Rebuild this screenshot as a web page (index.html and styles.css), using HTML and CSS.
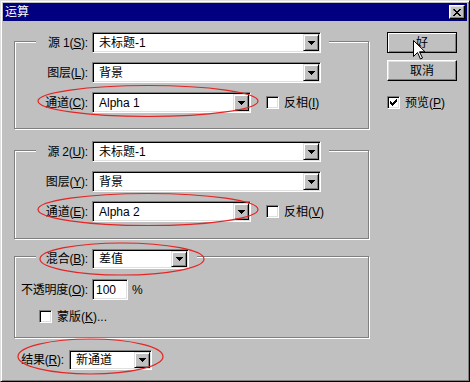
FILE: index.html
```html
<!DOCTYPE html>
<html lang="zh-CN">
<head>
<meta charset="utf-8">
<title>运算</title>
<link rel="stylesheet" href="styles.css">
</head>
<body>
<div class="window">
  <div class="titlebar">
    <span class="title">运算</span>
    <span class="close"><svg width="8" height="7" viewBox="0 0 8 7"><path d="M0 0h2v1h1v1h2v-1h1v-1h2v1h-1v1h-1v1h-1v1h1v1h1v1h1v1h-2v-1h-1v-1h-2v1h-1v1h-2v-1h1v-1h1v-1h1v-1h-1v-1h-1z" fill="#000"/></svg></span>
  </div>
  <div class="content">
    <div class="left">
      <div class="group g1">
        <div class="row legend">
          <span class="label"><span>源 1(<u>S</u>):</span></span>
          <div class="combo c-wide"><span class="val">未标题-1</span><span class="drop"><svg width="7" height="4" viewBox="0 0 7 4"><path d="M0 0h7v1H0zM1 1h5v1H1zM2 2h3v1H2zM3 3h1v1H3z" fill="#000"/></svg></span></div>
        </div>
        <div class="row">
          <span class="label"><span>图层(<u>L</u>):</span></span>
          <div class="combo c-wide"><span class="val">背景</span><span class="drop"><svg width="7" height="4" viewBox="0 0 7 4"><path d="M0 0h7v1H0zM1 1h5v1H1zM2 2h3v1H2zM3 3h1v1H3z" fill="#000"/></svg></span></div>
        </div>
        <div class="row">
          <span class="label"><span>通道(<u>C</u>):</span></span>
          <div class="combo c-mid"><span class="val">Alpha 1</span><span class="drop"><svg width="7" height="4" viewBox="0 0 7 4"><path d="M0 0h7v1H0zM1 1h5v1H1zM2 2h3v1H2zM3 3h1v1H3z" fill="#000"/></svg></span></div>
          <span class="check inv"></span>
          <span class="check-label">反相(<u>I</u>)</span>
        </div>
      </div>

      <div class="group g2">
        <div class="row legend">
          <span class="label"><span>源 2(<u>U</u>):</span></span>
          <div class="combo c-wide"><span class="val">未标题-1</span><span class="drop"><svg width="7" height="4" viewBox="0 0 7 4"><path d="M0 0h7v1H0zM1 1h5v1H1zM2 2h3v1H2zM3 3h1v1H3z" fill="#000"/></svg></span></div>
        </div>
        <div class="row">
          <span class="label"><span>图层(<u>Y</u>):</span></span>
          <div class="combo c-wide"><span class="val">背景</span><span class="drop"><svg width="7" height="4" viewBox="0 0 7 4"><path d="M0 0h7v1H0zM1 1h5v1H1zM2 2h3v1H2zM3 3h1v1H3z" fill="#000"/></svg></span></div>
        </div>
        <div class="row">
          <span class="label"><span>通道(<u>E</u>):</span></span>
          <div class="combo c-mid"><span class="val">Alpha 2</span><span class="drop"><svg width="7" height="4" viewBox="0 0 7 4"><path d="M0 0h7v1H0zM1 1h5v1H1zM2 2h3v1H2zM3 3h1v1H3z" fill="#000"/></svg></span></div>
          <span class="check inv"></span>
          <span class="check-label">反相(<u>V</u>)</span>
        </div>
      </div>

      <div class="group g3">
        <div class="row legend short">
          <span class="label"><span>混合(<u>B</u>):</span></span>
          <div class="combo c-blend small"><span class="val">差值</span><span class="drop"><svg width="7" height="4" viewBox="0 0 7 4"><path d="M0 0h7v1H0zM1 1h5v1H1zM2 2h3v1H2zM3 3h1v1H3z" fill="#000"/></svg></span></div>
        </div>
        <div class="row opacity">
          <span class="label"><span>不透明度(<u>O</u>):</span></span>
          <div class="field"><span>100</span></div>
          <span class="pct">%</span>
        </div>
        <div class="row mask">
          <span class="check"></span>
          <span class="check-label">蒙版(<u>K</u>)...</span>
        </div>
      </div>

      <div class="result">
        <span class="rlabel"><span>结果(<u>R</u>):</span></span>
        <div class="combo c-result small"><span class="val">新通道</span><span class="drop"><svg width="7" height="4" viewBox="0 0 7 4"><path d="M0 0h7v1H0zM1 1h5v1H1zM2 2h3v1H2zM3 3h1v1H3z" fill="#000"/></svg></span></div>
      </div>
    </div>

    <div class="right">
      <div class="btn default">好</div>
      <div class="btn">取消</div>
      <div class="preview">
        <span class="check checked"><svg width="7" height="7" viewBox="0 0 7 7"><path d="M6 0h1v1H6zM5 1h2v1H5zM0 2h1v1H0zM4 2h3v1H4zM0 3h2v1H0zM3 3h3v1H3zM0 4h5v1H0zM1 5h3v1H1zM2 6h1v1H2z" fill="#000"/></svg></span>
        <span class="check-label">预览(<u>P</u>)</span>
      </div>
    </div>
  </div>
</div>
<svg class="overlay" width="470" height="382" viewBox="0 0 470 382">
  <g fill="none" stroke="#e52424" stroke-width="1.2">
    <ellipse cx="148" cy="101" rx="110" ry="15.5"/>
    <ellipse cx="148" cy="209.5" rx="110" ry="16"/>
    <ellipse cx="122" cy="259" rx="82" ry="16"/>
    <ellipse cx="90.5" cy="356.5" rx="72.5" ry="17.5"/>
  </g>
  <path d="M413.5 40.5v16l4-4 3 6.5 2-1-3-6.2h5.5z" fill="#fff" stroke="#000" stroke-width="1" stroke-linejoin="miter"/>
</svg>
</body>
</html>
```
FILE: styles.css
```css
* { box-sizing: border-box; }
html, body { margin: 0; padding: 0; }
body {
  position: relative;
  width: 470px;
  height: 382px;
  overflow: hidden;
  background: #c0c0c0;
  font-family: "Liberation Sans", "Noto Sans CJK SC", sans-serif;
  font-size: 12px;
  line-height: 14px;
  color: #000;
}
u { text-decoration: underline; text-underline-offset: 1px; }

.window {
  width: 470px;
  height: 382px;
  background: #c0c0c0;
  border: 1px solid;
  border-color: #dfdfdf #000 #000 #dfdfdf;
  box-shadow: inset 1px 1px #fff, inset -1px -1px #808080;
  padding: 2px;
}
.titlebar {
  height: 18px;
  background: #000080;
  color: #fff;
  display: flex;
  align-items: center;
  justify-content: space-between;
  padding: 0 2px;
}
.title { font-size: 12px; line-height: 14px; }
.close {
  width: 16px;
  height: 14px;
  background: #c0c0c0;
  border: 1px solid;
  border-color: #fff #000 #000 #fff;
  box-shadow: inset -1px -1px #808080, inset 1px 1px #dfdfdf;
  display: flex;
  align-items: center;
  justify-content: center;
}
.close svg { display: block; }

.content { display: flex; padding-left: 11px; }
.left { width: 356px; padding-top: 20px; }
.right {
  margin-left: 17px;
  padding-top: 11px;
  display: flex;
  flex-direction: column;
}

.group {
  width: 355px;
  border: 1px solid #808080;
  box-shadow: inset 1px 1px #fff, 1px 1px #fff;
  padding-bottom: 15px;
}
.g2 { margin-top: 21px; padding-bottom: 16px; }
.g3 { margin-top: 17px; padding-bottom: 14px; }

.row {
  display: flex;
  align-items: center;
  height: 21px;
  margin-left: 21px;
}
.row + .row { margin-top: 9px; }
.legend {
  width: fit-content;
  margin-top: -10px;
  padding-right: 8px;
  background: #c0c0c0;
}
.legend.short { height: 20px; margin-top: -8px; }
.g3 .row + .row { margin-top: 10px; }
.row.mask { height: 13px; padding-left: 3px; }

.label {
  width: 52px;
  margin-right: 4px;
  display: flex;
  justify-content: flex-end;
  white-space: nowrap;
  letter-spacing: -0.2px;
}

.combo {
  display: flex;
  align-items: center;
  height: 21px;
  background: #fff;
  border: 1px solid;
  border-color: #808080 #fff #fff #808080;
  box-shadow: inset 1px 1px #000, inset -1px -1px #dfdfdf;
  padding: 1px;
}
.combo.small { height: 20px; }
.combo .val { flex: 1; padding-left: 5px; white-space: nowrap; }
.c-wide { width: 229px; }
.c-mid { width: 159px; }
.c-blend { width: 97px; }
.c-result { width: 83px; }

.drop {
  width: 16px;
  height: 17px;
  background: #c0c0c0;
  border: 1px solid;
  border-color: #dfdfdf #000 #000 #dfdfdf;
  box-shadow: inset 1px 1px #fff, inset -1px -1px #808080;
  display: flex;
  align-items: center;
  justify-content: center;
}
.small .drop { height: 16px; }
.drop svg { display: block; }

.check {
  width: 13px;
  height: 13px;
  background: #fff;
  border: 1px solid;
  border-color: #808080 #fff #fff #808080;
  box-shadow: inset 1px 1px #000, inset -1px -1px #dfdfdf;
  display: flex;
  align-items: center;
  justify-content: center;
  flex: none;
}
.check svg { display: block; }
.check.inv { margin-left: 15px; }
.check-label { margin-left: 5px; white-space: nowrap; }

.field {
  width: 36px;
  height: 21px;
  background: #fff;
  border: 1px solid;
  border-color: #808080 #fff #fff #808080;
  box-shadow: inset 1px 1px #000, inset -1px -1px #dfdfdf;
  display: flex;
  align-items: center;
  padding-left: 3px;
}
.pct { margin-left: 4px; }

.result {
  display: flex;
  align-items: center;
  height: 20px;
  margin-top: 12px;
  margin-left: 6px;
}
.rlabel {
  width: 44px;
  margin-right: 5px;
  display: flex;
  justify-content: flex-end;
  white-space: nowrap;
  letter-spacing: -0.2px;
}

.btn {
  width: 70px;
  height: 21px;
  background: #c0c0c0;
  border: 1px solid;
  border-color: #fff #000 #000 #fff;
  box-shadow: inset -1px -1px #808080, inset 1px 1px #dfdfdf;
  display: flex;
  align-items: center;
  justify-content: center;
}
.btn + .btn { margin-top: 7px; }
.btn.default {
  border-color: #000;
  box-shadow: inset 1px 1px #fff, inset -1px -1px #808080;
}
.preview {
  display: flex;
  align-items: center;
  margin-top: 15px;
  height: 13px;
}

.overlay {
  position: absolute;
  left: 0;
  top: 0;
  pointer-events: none;
}
```
